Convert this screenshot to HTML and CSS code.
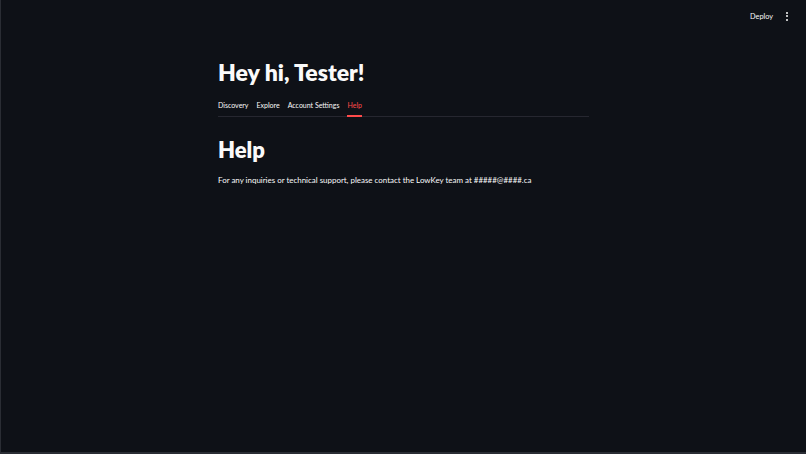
FILE: index.html
```html
<!DOCTYPE html>
<html>
<head>
    <title>LowKey</title>
    <link rel="stylesheet" href="styles.css">
</head>
<body>
    <div class="app-frame">
        <header class="app-header">
            <span class="deploy">Deploy</span>
            <span class="menu-dots"><i></i><i></i><i></i></span>
        </header>

        <main class="main-container">
            <h1>Hey hi, Tester!</h1>
            <div class="tab-list">
                <span class="tab">Discovery</span>
                <span class="tab">Explore</span>
                <span class="tab">Account Settings</span>
                <span class="tab active">Help</span>
            </div>

            <div class="tab-panel">
                <h2>Help</h2>
                <p>For any inquiries or technical support, please contact the LowKey team at #####@####.ca</p>
            </div>
        </main>
    </div>
</body>
</html>
```

FILE: styles.css
```css
html, body {
    margin: 0;
    height: 100%;
}

body {
    font-family: Lato, "Open Sans", sans-serif;
    background-color: #0e1117; /* Dark app background */
    color: #fafafa;
}

.app-frame {
    box-sizing: border-box;
    height: 100%;
    border-left: 1px solid #2a2d34;
    border-bottom: 2px solid #2a2d34;
}

.app-header {
    display: flex;
    justify-content: flex-end;
    align-items: center;
    gap: 13px;
    height: 32px;
    padding-right: 18px;
}

.deploy {
    font-size: 7.3px;
    color: #fafafa;
}

.menu-dots {
    display: flex;
    flex-direction: column;
    gap: 1.5px;
}

.menu-dots i {
    display: block;
    width: 2px;
    height: 2px;
    border-radius: 50%;
    background-color: #fafafa;
}

.main-container {
    width: 371px;
    margin: 0 auto;
    padding-top: 26px;
}

h1 {
    margin: 0;
    font-size: 23px;
    font-weight: 800;
    line-height: 28px;
}

.tab-list {
    display: flex;
    gap: 8px;
    margin-top: 15px;
    border-bottom: 1px solid #262730;
}

.tab {
    font-size: 7px;
    padding-bottom: 6px;
    margin-bottom: -1px;
    border-bottom: 2px solid transparent;
}

.tab.active {
    color: #ff4b4b; /* Streamlit red */
    border-bottom-color: #ff4b4b;
}

.tab-panel {
    padding-top: 19px;
}

h2 {
    margin: 0;
    font-size: 22px;
    font-weight: 800;
    line-height: 28px;
}

p {
    margin: 11px 0 0;
    font-size: 7.95px;
}
```
